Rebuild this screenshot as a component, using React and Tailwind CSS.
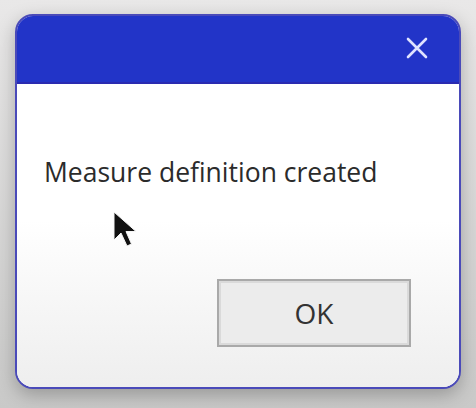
import React from 'react';

const Cursor = () => (
  <svg width="28" height="38" viewBox="0 0 28 38" className="absolute left-[112px] top-[210px]">
    <path d="M2 2 L2 30 L9 23 L15 36 L19.5 34 L14 21.5 L24 21.5 Z" fill="#111" stroke="#f4f4f4" strokeWidth="1" strokeLinejoin="round" />
  </svg>
);

export default function App() {
  return (
    <div className="relative w-[476px] h-[408px] bg-gradient-to-b from-[#e9e8e8] to-[#c9c9c8] pt-[14px] pl-[15px] font-['Open_Sans',sans-serif]">
      <div className="w-[446px] h-[375px] rounded-[18px] border-2 border-[#4a4ab9] bg-white overflow-hidden flex flex-col shadow-[0_6px_18px_rgba(0,0,0,0.25)]">
        <div className="h-[68px] bg-[#2234c8] border-b-2 border-[#2a2ab0] flex items-start justify-end pr-[30px] pt-[20px]">
          <svg width="24" height="24" viewBox="0 0 24 24">
            <path d="M3 3 L21 21 M21 3 L3 21" stroke="#dfe3ff" strokeWidth="2.6" strokeLinecap="round" />
          </svg>
        </div>
        <div className="flex-1 flex flex-col bg-gradient-to-b from-white from-[45%] to-[#eeeeee]">
          <div className="pl-[27px] pt-[72px] text-[26.5px] leading-[32px] text-[#2b2b2b] whitespace-nowrap">
            Measure definition created
          </div>
          <div className="flex-1 flex items-end justify-end pr-[48px] pb-[40px]">
            <button className="w-[194px] h-[68px] bg-[#ececec] border-2 border-[#a9a9a9] shadow-[inset_0_0_0_2px_#dadada] text-[28px] text-[#333] font-['Open_Sans',sans-serif]">
              OK
            </button>
          </div>
        </div>
      </div>
      <Cursor />
    </div>
  );
}
